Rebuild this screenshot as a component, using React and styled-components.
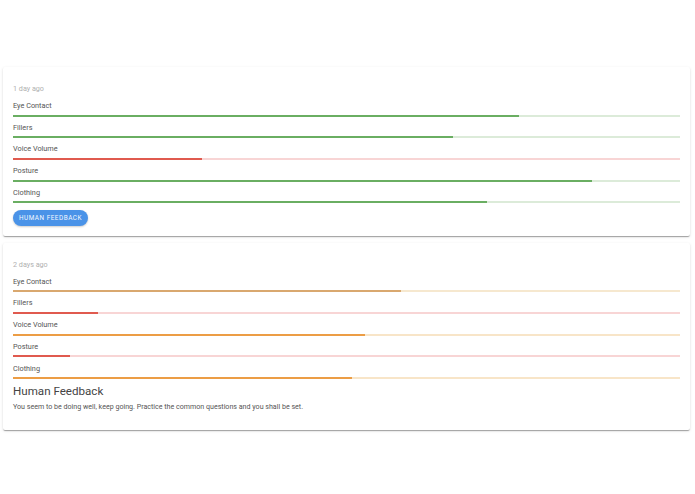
import React from 'react';
import styled, { createGlobalStyle } from 'styled-components';

const tones = {
	green: { bar: '#6aae62', track: '#dcebd9' },
	red: { bar: '#e05a4f', track: '#f8d5d5' },
	orange: { bar: '#ec9d45', track: '#f8e5c8' },
	tan: { bar: '#d9a86f', track: '#f6e8cf' },
};

const sessions = [
	{
		when: '1 day ago',
		scores: [
			{ name: 'Eye Contact', value: 75.9, tone: 'green' },
			{ name: 'Fillers', value: 66, tone: 'green' },
			{ name: 'Voice Volume', value: 28.3, tone: 'red' },
			{ name: 'Posture', value: 86.8, tone: 'green' },
			{ name: 'Clothing', value: 71, tone: 'green' },
		],
	},
	{
		when: '2 days ago',
		scores: [
			{ name: 'Eye Contact', value: 58.2, tone: 'tan' },
			{ name: 'Fillers', value: 12.8, tone: 'red' },
			{ name: 'Voice Volume', value: 52.7, tone: 'orange' },
			{ name: 'Posture', value: 8.6, tone: 'red' },
			{ name: 'Clothing', value: 50.8, tone: 'orange' },
		],
		feedback: 'You seem to be doing well, keep going. Practice the common questions and you shall be set.',
	},
];

const Global = createGlobalStyle`
	body {
		margin: 0;
		background: #fff;
		font-family: Roboto, "Liberation Sans", sans-serif;
		color: #444;
	}
`;

const Page = styled.div`
	padding: 67px 5px 20px 3px;
	display: flex;
	flex-direction: column;
	gap: 7px;
`;

const Card = styled.div`
	background: #fff;
	border-radius: 2px;
	padding: 17px 10px 10px;
	box-shadow: 0 2px 1px -1px rgba(0,0,0,.2), 0 1px 1px 0 rgba(0,0,0,.14), 0 1px 3px 0 rgba(0,0,0,.12);
`;

const When = styled.div`
	font-size: 7.2px;
	line-height: 10px;
	color: #b0b0b0;
	margin-bottom: 7px;
`;

const Scores = styled.div`
	display: flex;
	flex-direction: column;
	gap: 6.2px;
`;

const Label = styled.div`
	font-size: 7.3px;
	line-height: 10px;
	color: #555;
	margin-bottom: 3.5px;
`;

const Track = styled.div`
	height: 2px;
	background: ${p => tones[p.$tone].track};
	overflow: hidden;
`;

const Fill = styled.div`
	height: 100%;
	background: ${p => tones[p.$tone].bar};
`;

const Button = styled.button`
	margin-top: 6.5px;
	height: 16px;
	width: 75px;
	padding: 0;
	border: none;
	border-radius: 8px;
	background: #4a93e8;
	color: #f4f8fe;
	font-family: Roboto, "Liberation Sans", sans-serif;
	font-weight: 400;
	font-size: 6.4px;
	letter-spacing: 0.5px;
	text-transform: uppercase;
	box-shadow: 0 1px 2px rgba(0,0,0,.2);
`;

const Heading = styled.h3`
	margin: 5px 0 4px;
	font-size: 11.6px;
	font-weight: 400;
	line-height: 14px;
	color: #444;
`;

const Note = styled.p`
	margin: 0 0 8px;
	font-size: 7.1px;
	line-height: 10px;
	color: #555;
`;

const Score = ({ name, value, tone }) => (
	<div>
		<Label>{name}</Label>
		<Track $tone={tone}>
			<Fill $tone={tone} style={{ width: value + '%' }} />
		</Track>
	</div>
);

export default function App() {
	return (
		<>
			<Global />
			<Page>
				{sessions.map(s => (
					<Card key={s.when}>
						<When>{s.when}</When>
						<Scores>
							{s.scores.map(sc => <Score key={sc.name} {...sc} />)}
						</Scores>
						{s.feedback ? (
							<>
								<Heading>Human Feedback</Heading>
								<Note>{s.feedback}</Note>
							</>
						) : (
							<Button>Human Feedback</Button>
						)}
					</Card>
				))}
			</Page>
		</>
	);
}
